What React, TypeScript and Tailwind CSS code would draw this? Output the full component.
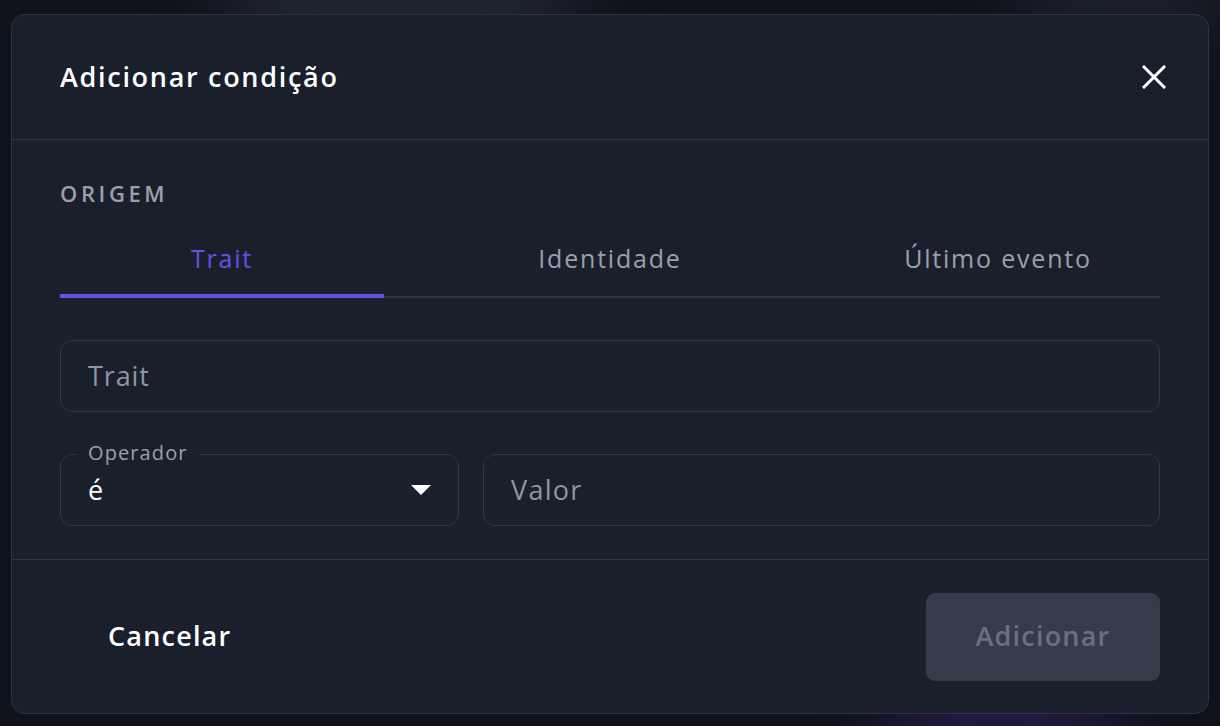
import React, { useState } from 'react';

const font = { fontFamily: '"Open Sans", "Noto Sans", sans-serif' };

export default function App() {
    const [tab, setTab] = useState(0);
    const tabs = [
        { label: 'Trait', w: 'w-[324px]' },
        { label: 'Identidade', w: 'flex-1' },
        { label: 'Último evento', w: 'w-[324px]' }
    ];

    return (
        <div
            className="relative w-[1220px] h-[726px] overflow-hidden bg-[#0e121a] pt-[14px] px-[11px] font-['Open_Sans',sans-serif]"
            style={font}
        >
            {/* background glow */}
            <div className="absolute -top-[60px] left-[220px] w-[360px] h-[110px] rounded-full bg-[#2a3040] blur-[40px] opacity-70" />
            <div className="absolute -top-[50px] right-[0px] w-[200px] h-[90px] rounded-full bg-[#262c3a] blur-[40px] opacity-70" />
            <div className="absolute -bottom-[40px] right-[100px] w-[240px] h-[70px] rounded-full bg-[#3b2a78] blur-[40px] opacity-60" />

            <div className="relative flex flex-col w-[1198px] h-[700px] bg-[#19202c] border border-[#2c3445] rounded-[14px]">
                {/* header */}
                <div className="flex items-center justify-between h-[125px] px-[48px] border-b border-[#2c3445]">
                    <h2 className="text-[27px] font-semibold text-white tracking-[1.7px]">Adicionar condição</h2>
                    <button className="mr-[-12px] p-[6px] text-white">
                        <svg width="24" height="24" viewBox="0 0 24 24">
                            <path d="M2 2 L22 22 M22 2 L2 22" stroke="currentColor" strokeWidth="3" strokeLinecap="square" />
                        </svg>
                    </button>
                </div>

                {/* content */}
                <div className="flex flex-col px-[48px] pt-[37px] pb-[33px] border-b border-[#2c3445]">
                    <div className="h-[32px] flex items-center text-[22px] font-semibold tracking-[3.6px] text-[#9a9fab]">ORIGEM</div>

                    <div className="mt-[13px] flex border-b-2 border-[#2c3445]">
                        {tabs.map((t, i) => (
                            <button
                                key={t.label}
                                onClick={() => setTab(i)}
                                className={`relative ${t.w} h-[74px] flex items-center justify-center text-[25px] tracking-[1.8px] ${tab === i ? 'text-[#6552e3]' : 'text-[#9aa0ad]'}`}
                            >
                                {t.label}
                                {tab === i && <span className="absolute left-0 right-0 -bottom-[2px] h-[4px] bg-[#6552e3]" />}
                            </button>
                        ))}
                    </div>

                    <div className="mt-[42px] h-[72px] flex items-center px-[27px] border border-[#2f3748] rounded-[12px]">
                        <input
                            placeholder="Trait"
                            className="w-full bg-transparent outline-none text-[27px] text-white placeholder:text-[#8f96a4] tracking-[0.9px]"
                        />
                    </div>

                    <div className="mt-[42px] flex gap-[24px]">
                        <div className="relative w-[399px] h-[72px] flex items-center justify-between pl-[27px] pr-[27px] border border-[#2f3748] rounded-[12px]">
                            <span className="absolute -top-[17px] left-[16px] px-[11px] bg-[#19202c] text-[20px] text-[#9aa0ad] tracking-[1.1px]">Operador</span>
                            <span className="text-[27px] text-white">é</span>
                            <svg width="20" height="10" viewBox="0 0 20 10">
                                <polygon points="0,0 20,0 10,10" fill="#ffffff" />
                            </svg>
                        </div>
                        <div className="flex-1 h-[72px] flex items-center px-[27px] border border-[#2f3748] rounded-[12px]">
                            <input
                                placeholder="Valor"
                                className="w-full bg-transparent outline-none text-[27px] text-white placeholder:text-[#8f96a4] tracking-[1.3px]"
                            />
                        </div>
                    </div>
                </div>

                {/* footer */}
                <div className="flex-1 flex items-center justify-between pl-[72px] pr-[48px]">
                    <button className="px-[24px] h-[64px] text-[27px] font-semibold text-white tracking-[1.2px]">Cancelar</button>
                    <button
                        disabled
                        className="w-[234px] h-[88px] rounded-[9px] bg-[#363b4a] text-[27px] font-semibold text-[#6b7080] tracking-[1.2px]"
                    >
                        Adicionar
                    </button>
                </div>
            </div>
        </div>
    );
}
